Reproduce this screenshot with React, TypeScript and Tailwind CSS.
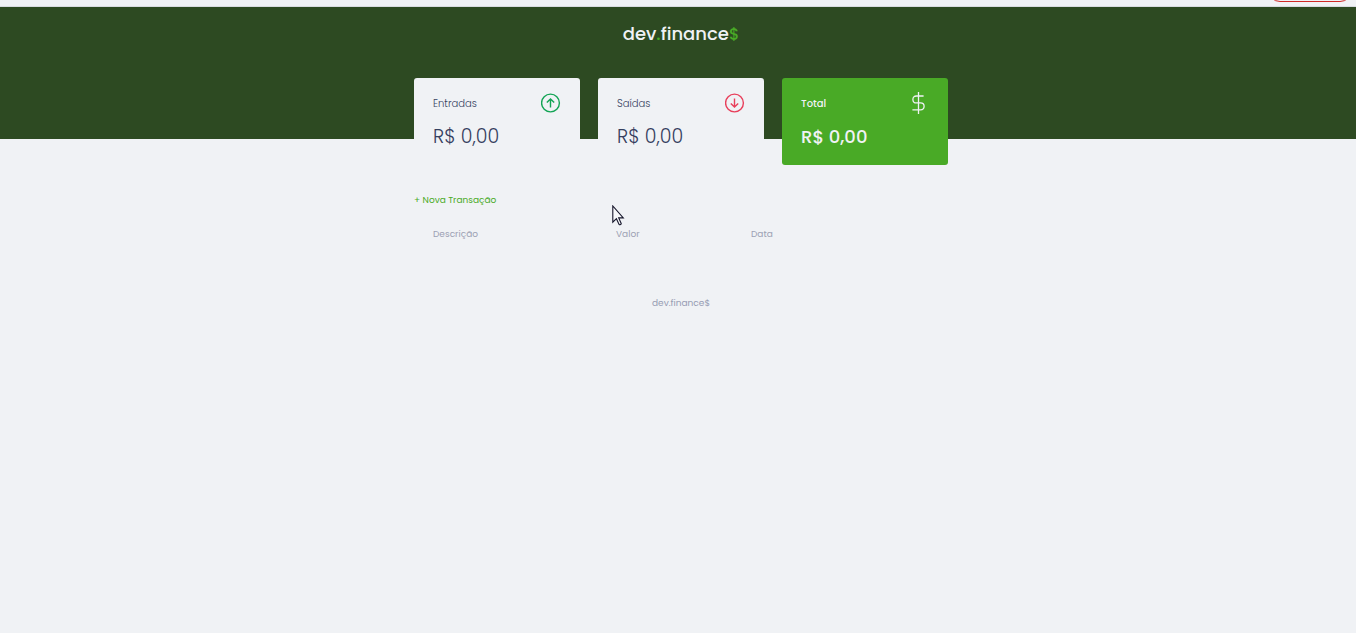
import type { ReactNode } from 'react';

function ArrowIcon({ direction }: { direction: 'up' | 'down' }) {
  const up = direction === 'up';
  return (
    <svg
      viewBox="0 0 20 20"
      fill="none"
      stroke="currentColor"
      className={up ? 'size-5 text-[#12a454]' : 'size-5 text-[#e83f5b]'}
      aria-hidden="true"
    >
      <circle cx="9.5" cy="10" r="8.9" strokeWidth="1.4" />
      <path
        d={up ? 'M9.5 14.4V6M5.8 9.6 9.5 5.9l3.7 3.7' : 'M9.5 5.6V14M5.8 10.4 9.5 14.1l3.7-3.7'}
        strokeWidth="1.4"
      />
    </svg>
  );
}

function DollarIcon() {
  return (
    <svg viewBox="0 0 14 24" fill="none" stroke="#f0f2f5" strokeWidth="1.3" className="mr-1 h-6 w-3.5" aria-hidden="true">
      <path d="M7.5 1v22M12.6 5H5.4C3.2 5 1.9 6.2 1.9 8.4S3.2 11.9 5.4 11.9h4.1c2.3 0 3.6 1.2 3.6 3.4s-1.3 3.5-3.6 3.5H1.4" />
    </svg>
  );
}

function Card({ title, value, icon, total = false }: { title: string; value: string; icon: ReactNode; total?: boolean }) {
  return (
    <div
      className={
        total
          ? 'rounded-[3px] bg-[#49aa26] px-[19px] pt-3 pb-3.5 font-medium text-[#f0f2f5]'
          : 'rounded-[3px] bg-[#f0f2f5] px-[19px] pt-3 pb-3.5 font-light text-[#363f5f]'
      }
    >
      <h3 className="flex h-[26px] items-center justify-between text-[10px]">
        <span>{title}</span>
        {icon}
      </h3>
      <p className={total ? 'mt-1.5 text-[18px] leading-[29px]' : 'mt-1.5 text-[19px] leading-[29px]'}>{value}</p>
    </div>
  );
}

export default function App() {
  return (
    <div className="min-h-screen bg-[#f0f2f5] font-['Poppins','Inter',sans-serif]">
      <div className="flex h-[7px] items-start justify-end overflow-hidden border-b border-[#d9dce1] pr-1">
        <div className="-mt-[22px] h-6 w-[84px] shrink-0 rounded-[18px] border border-[#cf2a27]" />
      </div>
      <header className="flex h-[132px] justify-center bg-[#2d4a22] pt-3 pl-1.5">
        <h1 className="text-[18px] leading-[30px] font-medium text-[#f0f2f5]">
          dev<span className="text-[#49aa26]">.</span>finance<span className="text-[16px] text-[#49aa26]">$</span>
        </h1>
      </header>
      <div className="pl-1.5">
        <main className="mx-auto -mt-[61px] max-w-[534px]">
          <section className="grid grid-cols-3 gap-[18px]">
            <Card title="Entradas" value="R$ 0,00" icon={<ArrowIcon direction="up" />} />
            <Card title="Saídas" value="R$ 0,00" icon={<ArrowIcon direction="down" />} />
            <Card total title="Total" value="R$ 0,00" icon={<DollarIcon />} />
          </section>
          <section className="relative mt-7">
            <a href="#nova" className="block w-fit text-[9px] leading-[14px] text-[#49aa26]">
              + Nova Transação
            </a>
            <table className="mt-2.5 w-full table-fixed text-left text-[9px] leading-[14px] text-[#9ca1b3]">
              <thead>
                <tr>
                  <th className="w-[183px] py-2.5 pl-[19px] font-normal">Descrição</th>
                  <th className="w-[135px] py-2.5 pl-[19px] font-normal">Valor</th>
                  <th className="py-2.5 pl-[19px] font-normal">Data</th>
                </tr>
              </thead>
            </table>
            <svg viewBox="0 0 13 21" className="absolute top-3 left-[198px] h-[21px] w-[13px]" aria-hidden="true">
              <path
                d="M.8 1v16.2l3.6-3.5 2.7 5.7c.7.8 2.3.1 2.1-1l-2.5-5.5h4.6z"
                fill="#f7f8fa"
                stroke="#15152a"
                strokeWidth="1.1"
              />
            </svg>
          </section>
        </main>
        <footer className="mt-[45px] text-center text-[9px] leading-[14px] text-[#969cb3]">dev.finance$</footer>
      </div>
    </div>
  );
}
